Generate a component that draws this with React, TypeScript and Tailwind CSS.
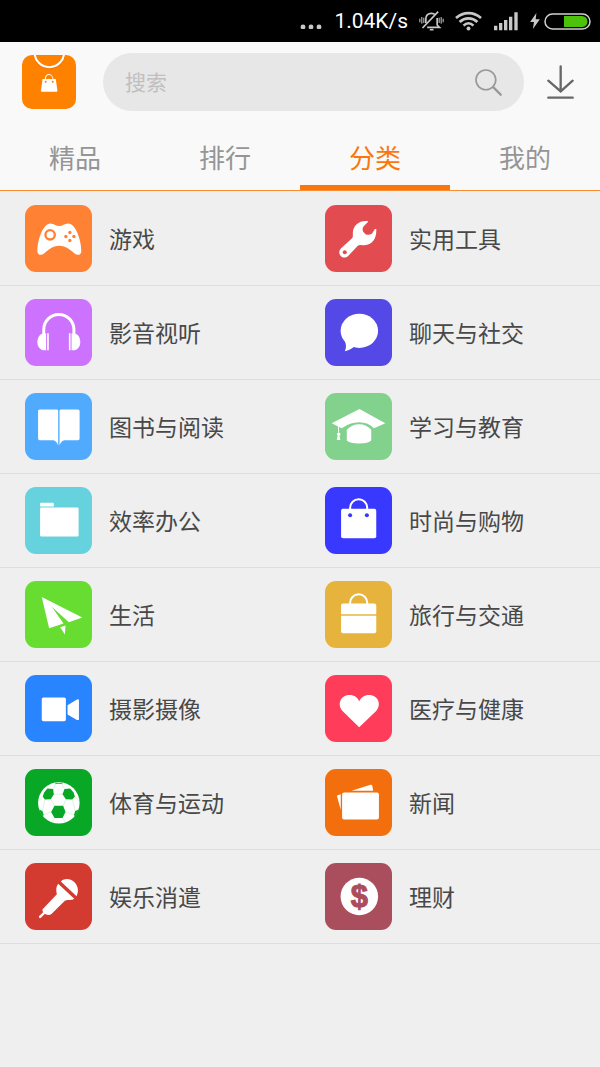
import type { ReactNode } from "react";

type Category = {
  name: string;
  color: string;
  icon: ReactNode;
};

// every icon is drawn on a 200 x 200 tile
const categories: Category[] = [
  {
    name: "游戏",
    color: "bg-[#ff8133] text-[#ff8133]",
    icon: (
      <>
        <path d="M76 55C86 55 92 63 102 63S118 55 129 55C151 55 168 104 168 137C168 151 156 151 148 145C135 134 122 122 102 122S70 134 57 145C49 151 37 151 37 137C37 104 54 55 76 55Z" />
        <circle cx="75" cy="89" r="14" fill="none" stroke="currentColor" strokeWidth="7" />
        <g fill="currentColor">
          <circle cx="134" cy="82" r="5" />
          <circle cx="134" cy="106" r="5" />
          <circle cx="122" cy="94" r="5" />
          <circle cx="146" cy="94" r="5" />
        </g>
      </>
    ),
  },
  {
    name: "实用工具",
    color: "bg-[#e24c50] text-[#e24c50]",
    icon: (
      <>
        <path d="M128 48C104 45 83 60 83 84C83 92 84 96 80 100L48 129C41 136 41 146 47 152C53 158 62 158 69 152L98 122C103 117 110 120 118 120C141 119 155 100 153 72L149 72L140 86C134 90 126 90 121 87L114 80C111 74 112 68 115 64L128 51Z" />
        <circle cx="59" cy="141" r="6" fill="currentColor" />
      </>
    ),
  },
  {
    name: "影音视听",
    color: "bg-[#cd72ff] text-[#cd72ff]",
    icon: (
      <>
        <path d="M56 108V91A45 45 0 0 1 146 91V108" fill="none" stroke="#fff" strokeWidth="9" />
        <path d="M60 103H63V153C45 155 37 142 37 129C37 115 45 105 52 104Z" />
        <path d="M142 103H139V153C157 155 165 142 165 129C165 115 157 105 150 104Z" />
        <path d="M66 102H71V153H66ZM131 102H136V153H131Z" />
      </>
    ),
  },
  {
    name: "聊天与社交",
    color: "bg-[#5449e6] text-[#5449e6]",
    icon: (
      <>
        <ellipse cx="102.500" cy="95" rx="56" ry="51" />
        <path d="M57 118C64 136 64 146 59 156C71 153 78 149 90 140Z" />
      </>
    ),
  },
  {
    name: "图书与阅读",
    color: "bg-[#50abff] text-[#50abff]",
    icon: (
      <>
        <path d="M44 49H94Q99 49 99 53V157Q95 143 84 141H44Q39 141 39 136V54Q39 49 44 49Z" />
        <path d="M158 49H108Q103 49 103 53V157Q107 143 118 141H158Q163 141 163 136V54Q163 49 158 49Z" />
      </>
    ),
  },
  {
    name: "学习与教育",
    color: "bg-[#82d18d] text-[#82d18d]",
    icon: (
      <>
        <path d="M103 48L20 90L50 105Q74 87 102 87Q130 87 146 105L180 90Z" />
        <path d="M65 110Q80 93 102 93T138 110V142Q130 151 102 151T65 142Z" />
        <path d="M39 95H42V118H39ZM38 127H43L46 140H35Z" />
        <circle cx="41" cy="123" r="5" />
      </>
    ),
  },
  {
    name: "效率办公",
    color: "bg-[#66d2de] text-[#66d2de]",
    icon: (
      <>
        <path d="M45 58V50Q45 47 48 47H83Q86 47 86 50V58Z" />
        <rect x="45" y="61" width="115" height="87" rx="4" />
      </>
    ),
  },
  {
    name: "时尚与购物",
    color: "bg-[#3838ff] text-[#3838ff]",
    icon: (
      <>
        <rect x="48" y="65" width="105" height="88" rx="6" />
        <path d="M75 68V62A25 25 0 0 1 126 62V68" fill="none" stroke="#fff" strokeWidth="6" />
        <circle cx="75" cy="84" r="6" fill="currentColor" />
        <circle cx="125" cy="84" r="6" fill="currentColor" />
      </>
    ),
  },
  {
    name: "生活",
    color: "bg-[#67dd32] text-[#67dd32]",
    icon: <path d="M50 48L171 109L131 123L80 77L115 127L72 141ZM105 138L121 133L119 160Z" />,
  },
  {
    name: "旅行与交通",
    color: "bg-[#e6b43c] text-[#e6b43c]",
    icon: (
      <>
        <path d="M48 99V73Q48 67 54 67H147Q153 67 153 73V99Z" />
        <path d="M48 104V150Q48 156 54 156H147Q153 156 153 150V104Z" />
        <path d="M75 70V65A25 25 0 0 1 126 65V70" fill="none" stroke="#fff" strokeWidth="6" />
      </>
    ),
  },
  {
    name: "摄影摄像",
    color: "bg-[#2984ff] text-[#2984ff]",
    icon: (
      <>
        <rect x="50" y="67" width="72" height="71" rx="5" />
        <path d="M127 90L155 73Q161 71 161 76V131Q161 136 155 134L127 118Z" />
      </>
    ),
  },
  {
    name: "医疗与健康",
    color: "bg-[#ff3d5a] text-[#ff3d5a]",
    icon: (
      <path d="M102 156L53 108C35 90 46 60 73 60C88 60 98 68 102 79C107 68 117 60 132 60C159 60 170 90 152 108Z" />
    ),
  },
  {
    name: "体育与运动",
    color: "bg-[#09a726] text-[#09a726]",
    icon: (
      <>
        <circle cx="101" cy="101" r="62" />
        <g fill="currentColor">
          <path d="M57 70L67 58L84 60L86 75L77 90L59 91L53 82Z" />
          <path d="M145 70L135 58L118 60L112 75L122 90L141 91L149 82Z" />
          <path d="M88 110H114L121 128L112 146H88L78 128Z" />
          <path d="M42 121L52 125L56 137L53 141Q45 132 42 121ZM160 121L150 125L146 137L149 141Q157 132 160 121Z" />
          <path d="M88 41H114L110 44H92Z" />
        </g>
        <path
          d="M86 75H113M77 90L88 110M122 90L114 110M59 91L52 125M141 91L150 125M78 128L56 137M121 128L146 137M88 146L82 158M112 146L120 158M84 60L92 44M118 60L110 44M53 82L40 96M149 82L162 96"
          fill="none"
          stroke="currentColor"
          strokeOpacity="0.3"
          strokeWidth="1.500"
        />
      </>
    ),
  },
  {
    name: "新闻",
    color: "bg-[#f36f0d] text-[#f36f0d]",
    icon: (
      <>
        <rect x="51" y="70" width="110" height="81" rx="6" />
        <path d="M79 65L136 47Q140 46 141 50L144 65Z" />
        <path d="M47 75V122L36 82Q35 79 38 78Z" />
      </>
    ),
  },
  {
    name: "娱乐消遣",
    color: "bg-[#d33b31] text-[#d33b31]",
    icon: (
      <>
        <path d="M107 55C118 45 136 46 147 57C159 68 161 86 154 99Z" />
        <path d="M99 62L147 107C138 114 127 107 119 113L79 152C72 158 52 155 52 139L95 93C92 80 93 70 99 62Z" />
        <path d="M58 148L45 161" fill="none" stroke="#fff" strokeWidth="7" strokeLinecap="round" />
      </>
    ),
  },
  {
    name: "理财",
    color: "bg-[#aa4d5c] text-[#aa4d5c]",
    icon: (
      <>
        <circle cx="102.500" cy="100" r="56" />
        <text
          x="102.500"
          y="132"
          textAnchor="middle"
          fill="currentColor"
          stroke="currentColor"
          strokeWidth="3"
          className="font-['Liberation_Sans'] text-[92px] font-bold"
        >
          $
        </text>
      </>
    ),
  },
];

const tabs = ["精品", "排行", "分类", "我的"];
const activeTab = "分类";

const StatusBar = () => (
  <div className="flex h-[42px] items-center justify-end bg-black pr-[9px] text-[#c8c8c8]">
    <svg viewBox="0 0 22 16" className="h-4 w-[22px]" fill="currentColor">
      <circle cx="3" cy="14" r="2.400" />
      <circle cx="11" cy="14" r="2.400" />
      <circle cx="19" cy="14" r="2.400" />
    </svg>
    <span className="ml-3 pt-0.5 font-['Roboto',sans-serif] text-[21px] text-white">1.04K/s</span>
    <svg
      viewBox="0 0 74 60"
      className="ml-[11px] h-5 w-[25px]"
      fill="none"
      stroke="currentColor"
      strokeWidth="5"
    >
      <path d="M20 36V24C20 12 28 7 37 7C41 7 45 8 48 11M54 21V42L61 49H24" />
      <path d="M10 51L57 2" />
      <path d="M32 56H43" />
      <path d="M2 23V34M8 18V38M14 20V36M60 20V36M66 18V38M72 23V34" strokeWidth="3" />
    </svg>
    <svg
      viewBox="0 0 82 60"
      className="ml-[11px] h-5 w-[27px]"
      fill="none"
      stroke="currentColor"
      strokeWidth="8"
    >
      <path d="M3 21Q20 6 41 6T79 21" />
      <path d="M14 33Q26 22 41 22T68 33" />
      <path d="M26 44Q33 37 41 37T56 44" />
      <circle cx="41" cy="53" r="6" fill="currentColor" stroke="none" />
    </svg>
    <svg viewBox="0 0 72 60" className="ml-3 h-5 w-6" fill="currentColor">
      <path d="M0 44h10v14H0zM15 36h10v22h-10zM30 27h10v31h-10zM45 17h10v41h-10zM61 4h10v54h-10z" />
    </svg>
    <svg viewBox="0 0 28 46" className="ml-3 h-4 w-[10px]" fill="currentColor">
      <path d="M18 0L0 26H11L8 46L28 18H16Z" />
    </svg>
    <svg viewBox="0 0 47 17" className="ml-1 h-[17px] w-[47px]">
      <rect x="1" y="1" width="45" height="15" rx="7.500" fill="none" stroke="#d0d0d0" strokeWidth="1.500" />
      <path d="M20 3H38A5.500 5.500 0 0 1 38 14H20Z" fill="#4cc20a" />
    </svg>
  </div>
);

const Logo = () => (
  <svg viewBox="0 0 160 160" className="size-[54px] shrink-0 rounded-[10px] bg-[#ff8100]" fill="#fff">
    <circle cx="81" cy="-4" r="44" fill="none" stroke="#e06c00" strokeOpacity="0.4" strokeWidth="6" />
    <circle cx="81" cy="-8" r="44" fill="none" stroke="#fff" strokeWidth="6" />
    <path d="M61 71H100L105 106Q105 109 102 109H59Q56 109 56 106Z" />
    <path d="M69 74C69 64 74 58 80 58S92 64 92 74" fill="none" stroke="#fff" strokeWidth="3" />
    <circle cx="70" cy="79" r="3" fill="#ff8100" />
    <circle cx="91" cy="79" r="3" fill="#ff8100" />
  </svg>
);

const Header = () => (
  <header className="bg-[#f9f9f9] pt-[11px]">
    <div className="flex items-center pr-6 pl-[22px]">
      <Logo />
      <form className="ml-[27px] flex h-[58px] min-w-0 flex-1 items-center rounded-full bg-[#e7e7e7] px-[22px]">
        <input
          type="search"
          aria-label="搜索"
          placeholder="搜索"
          className="min-w-0 flex-1 bg-transparent text-[21px] outline-none placeholder:text-[#bfbfbf]"
        />
        <button type="button" aria-label="搜索">
          <svg viewBox="0 0 82 82" className="size-[27px]" fill="none" stroke="#999" strokeLinecap="round">
            <circle cx="33" cy="33" r="30" strokeWidth="5" />
            <path d="M56 56L78 78" strokeWidth="7" />
          </svg>
        </button>
      </form>
      <button type="button" aria-label="下载" className="ml-5 flex w-8 justify-center">
        <svg
          viewBox="0 0 81 102"
          className="h-[34px] w-[27px]"
          fill="none"
          stroke="#686868"
          strokeWidth="7"
          strokeLinecap="round"
        >
          <path d="M41 4V78M4 47L41 79L77 47M4 98H77" />
        </svg>
      </button>
    </div>
    <nav className="grid h-20 grid-cols-4 border-b border-[#fa8c32]">
      {tabs.map((tab) => (
        <button
          key={tab}
          type="button"
          className={
            tab === activeTab
              ? "border-b-[5px] border-[#f9770f] pt-4 text-[26px] text-[#f9770f]"
              : "border-b-[5px] border-transparent pt-4 text-[26px] text-[#959595]"
          }
        >
          {tab}
        </button>
      ))}
    </nav>
  </header>
);

const CategoryItem = ({ name, color, icon }: Category) => (
  <li className="border-b border-[#dedede]">
    <a href="#" className="flex h-[93px] items-center gap-[17px] pl-[25px]">
      <span className={`size-[67px] shrink-0 overflow-hidden rounded-[11px] ${color}`}>
        <svg viewBox="0 0 200 200" className="size-full" fill="#fff">
          {icon}
        </svg>
      </span>
      <span className="text-[23px] text-[#484848]">{name}</span>
    </a>
  </li>
);

const App = () => {
  return (
    <div className="min-h-screen bg-[#efefef] font-['Noto_Sans_CJK_SC',sans-serif]">
      <StatusBar />
      <Header />
      <ul className="grid grid-cols-2 pt-px">
        {categories.map((category) => (
          <CategoryItem key={category.name} {...category} />
        ))}
      </ul>
    </div>
  );
};

export default App;
